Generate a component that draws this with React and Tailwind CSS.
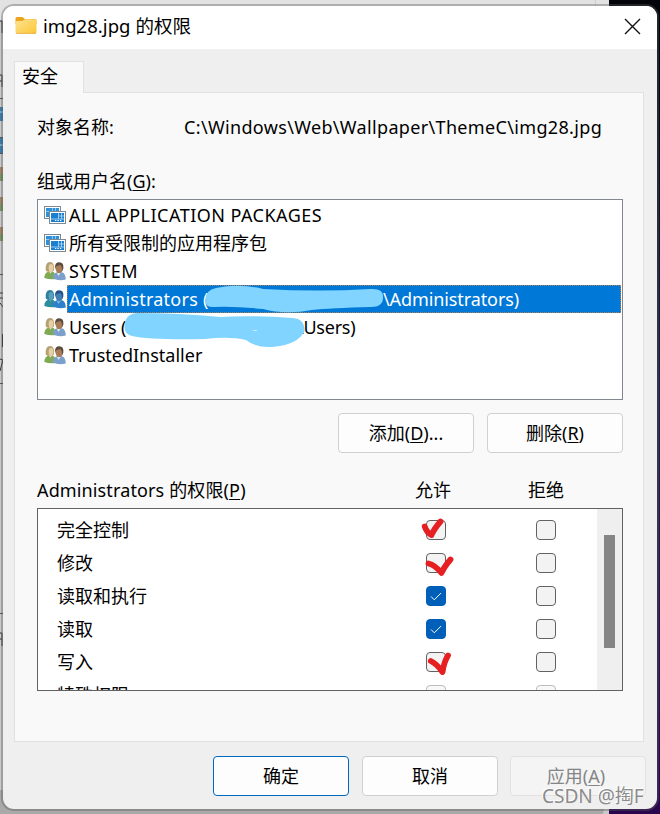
import React from 'react';

const FONT = "font-['Noto_Sans','Noto_Sans_CJK_SC',sans-serif]";

function Folder() {
  return (
    <svg width="22" height="19" viewBox="0 0 22 19" className="mb-1 shrink-0">
      <defs>
        <linearGradient id="fold" x1="0" y1="0" x2="1" y2="1">
          <stop offset="0" stopColor="#ffe391" />
          <stop offset="1" stopColor="#fbc737" />
        </linearGradient>
      </defs>
      <path d="M0.5 2.5 Q0.5 1 2 1 H7.5 L9.8 3 H20 Q21.5 3 21.5 4.5 V8 H0.5Z" fill="#eaa51c" />
      <path d="M0.5 6.5 Q0.5 5 2 5 H7.5 L9.8 3.2 H20 Q21.5 3.2 21.5 4.7 V16 Q21.5 17.5 20 17.5 H2 Q0.5 17.5 0.5 16Z" fill="url(#fold)" />
      <path d="M1 17.4 H21" stroke="#e2a93a" strokeWidth="0.8" />
    </svg>
  );
}

function PackageIcon() {
  return (
    <svg width="22" height="20" viewBox="0 0 22 20" className="shrink-0">
      <rect x="0.5" y="1.5" width="16" height="12" fill="#fff" stroke="#7d8993" />
      <rect x="2" y="3" width="13" height="9" fill="#2e8fda" />
      <path d="M2 6.5H15M8.5 3V6.5M11.5 3V6.5" stroke="#b7dcf6" strokeWidth="0.7" />
      <rect x="5.5" y="6.5" width="16" height="12" fill="#fff" stroke="#7d8993" />
      <rect x="7" y="8" width="13" height="9" fill="#1b7fd0" />
      <path d="M7 14H20M14.5 8V14M17.5 8V14M14.5 11H20" stroke="#b7dcf6" strokeWidth="0.8" />
      <path d="M11 15.5h1.3M13.5 15.5h1.3M16 15.5h1.3" stroke="#fff" strokeWidth="1.1" />
    </svg>
  );
}

function PeopleIcon({ selected }) {
  const c = selected
    ? { h1: '#2e7f9f', f1: '#5a9fbb', b1: '#2d8c9d', h2: '#245387', f2: '#3f7fb6', b2: '#2f80ca', n: '#80b4d9' }
    : { h1: '#b5a070', f1: '#e6cfa6', b1: '#80a955', h2: '#5d4a3d', f2: '#a97c58', b2: '#7ba0cc', n: '#dce5ed' };
  return (
    <svg width="22" height="20" viewBox="0 0 22 20" className="shrink-0">
      <path d="M0.3 17 Q0.3 11.5 5 10.5 H8.5 Q11.5 11 12 18 Q6 19 0.3 17Z" fill={c.b1} />
      <path d="M1.8 9.5 Q1 1 6 1 Q11 1 10 9.5 L8 11 H4Z" fill={c.h1} />
      <ellipse cx="7" cy="6.8" rx="2.4" ry="3.9" fill={c.f1} />
      <path d="M4.5 10.3 L6.5 12.8 L8.5 10.3Z" fill={c.f1} />
      <path d="M9 17.5 Q9 12 13 11.3 H18 Q21.5 12.3 21.8 18.5 Q15 20.5 9 17.5Z" fill={c.b2} />
      <path d="M11 6 Q11 1.3 15.3 1.3 Q20 1.3 19.3 7.5 Q18.8 10.5 17 11 L12 8Z" fill={c.h2} />
      <path d="M11.3 6 Q13 4.5 16.3 4 Q18.6 6 18.2 9 Q17.4 12.6 14.8 12.6 Q12 12 11.3 6Z" fill={c.f2} />
      <path d="M12.8 12 L14.5 15 L16.6 12Z" fill={c.n} />
    </svg>
  );
}

function Member({ icon, selected, children, className = '' }) {
  return (
    <div className="flex h-7 items-center pl-1.5">
      {icon === 'package' ? <PackageIcon /> : <PeopleIcon selected={selected} />}
      <div className={`ml-px mr-px flex h-7 flex-1 items-center whitespace-pre pl-0.5 ${className} ${selected ? 'border border-dotted border-[#b08050] bg-[#0078d7] pl-px text-white' : ''}`}>
        {children}
      </div>
    </div>
  );
}

function Box({ checked, faint }) {
  return (
    <span className={`flex size-5 shrink-0 items-center justify-center rounded-[4px] border ${checked ? 'border-[#005fb8] bg-[#005fb8]' : faint ? 'border-[#bdbdbd] bg-[#f8f8f8]' : 'border-[#626262] bg-[#f3f3f3]'}`}>
      {checked && (
        <svg width="12" height="10" viewBox="0 0 12 10" fill="none" stroke="#fff" strokeWidth="1">
          <path d="M1 5.5 L4.3 8.8 L11 2.1" />
        </svg>
      )}
    </span>
  );
}

function Permission({ name, checked, faint }) {
  return (
    <div className="flex h-[33px] shrink-0 items-center">
      <span className="w-[369px]">{name}</span>
      <Box checked={checked} faint={faint} />
      <span className="w-[90px]" />
      <Box faint={faint} />
    </div>
  );
}

function Button({ children, className }) {
  return (
    <button className={`flex h-10 w-[136px] shrink-0 items-center justify-center rounded-[4px] border ${className}`}>
      <span>{children}</span>
    </button>
  );
}

function Desktop() {
  return (
    <div className="absolute inset-0 bg-[#c9c9c9]">
      <div className="absolute left-0 top-0 h-5 w-[609px] bg-[#e2e2e2]" />
      <div className="absolute left-[595px] top-0 h-5 w-px bg-[#cfcfcf]" />
      <div className="absolute right-0 top-0 h-full w-[51px] bg-linear-to-b from-[#02040a] via-[#20204a] to-[#29054d]" />
      <div className="absolute bottom-0 left-0 h-6 w-[609px] bg-[#a9a9a9] [clip-path:polygon(0_0,100%_0,99%_100%,0_100%)]" />
      <svg className="absolute left-0 top-0" width="6" height="814">
        <g stroke="#555" strokeWidth="1">
          <path d="M0 98.5H3M0 137.5H3M0 153.5H3M0 274.5H3M0 383.5H3M0 613.5H3" />
        </g>
        <path d="M0 107h3v14h-3zM0 138h3v15h-3z" fill="#377caf" />
        <path d="M0 112h3M0 145h3" stroke="#b7d8ed" />
        <path d="M0 167h3v7h-3zM0 197h3v7h-3zM0 227h3v7h-3z" fill="#a28467" />
        <path d="M0 174h3v7h-3zM0 204h3v7h-3zM0 234h3v7h-3z" fill="#779363" />
        <path d="M0 21h2v12M0 75h2v12M0 81h2M0 293h3M0 298h3M0 303l3 4M2.5 334v13M0 359l3 1l-3 11M0 633h2v13M0 639h2" stroke="#333" fill="none" />
      </svg>
    </div>
  );
}

export default function App() {
  return (
    <div className={`relative h-[814px] w-[660px] overflow-hidden text-[18px] leading-6 text-black ${FONT}`}>
      <Desktop />
      <div className="relative flex h-full w-full pl-[3px] pt-1.5">
        <main className="flex h-[803px] w-[654px] flex-col overflow-hidden rounded-[11px] bg-[#efefef] shadow-[0_0_0_2px_rgba(90,90,90,0.38)]">
          <header className="flex h-[43px] shrink-0 items-center bg-white pl-3">
            <Folder />
            <h1 className="mb-[3px] ml-1.5 flex-1 text-[18.5px] tracking-[0.05px]">img28.jpg 的权限</h1>
            <svg width="17" height="17" viewBox="0 0 17 17" className="mb-0.5 mr-4" stroke="#111" strokeWidth="1.4">
              <path d="M1 1L16 16M16 1L1 16" />
            </svg>
          </header>

          <div className="z-10 ml-[11px] mt-3 flex h-8 w-[70px] shrink-0 items-center border border-b-0 border-[#e1e1e1] bg-[#f9f9f9] pb-[3px] pl-[7px]">安全</div>
          <section className="-mt-px ml-[11px] flex h-[650px] w-[630px] shrink-0 flex-col border border-[#e1e1e1] bg-[#f9f9f9] pl-[22px] pt-[22px]">
            <div className="flex h-6 items-center">
              <span className="w-[147px]">对象名称:</span>
              <span className="tracking-[0.34px]">C:\Windows\Web\Wallpaper\ThemeC\img28.jpg</span>
            </div>
            <div className="mt-[30px] h-6">组或用户名(<u className="decoration-1 underline-offset-2">G</u>):</div>
            <div className="relative mt-1.5 h-[201px] w-[586px] border border-[#828790] bg-white pt-px">
              <Member icon="package" className="tracking-[0.47px]">ALL APPLICATION PACKAGES</Member>
              <Member icon="package">所有受限制的应用程序包</Member>
              <Member className="tracking-[0.45px]">SYSTEM</Member>
              <Member selected><span className="w-[316px] tracking-[0.25px]">Administrators (</span></Member>
              <Member className="-tracking-[0.1px]">Users (</Member>
              <Member>TrustedInstaller</Member>
              <span className="absolute left-[345px] top-[87px] -tracking-[0.1px] text-white">\Administrators)</span>
              <span className="absolute left-[259px] top-[115px] -tracking-[0.25px]">\Users)</span>
              <svg className="absolute -left-px -top-px" width="586" height="201" viewBox="37 199 586 201" fill="#80d4ff">
                <path d="M205.5 301 Q205 290 216 288 Q240 283 263 289 Q320 292 370 289 Q383 288 383 296 Q384 307 371 307 Q330 308 312 310 Q285 315 263 309 Q235 306 213 307 Q205 307 205.5 301Z" />
                <path d="M124.5 326 Q125 314 137 313 Q180 313 220 317 Q250 315 293 318 Q305 319 304.5 331 Q298 345 272 347 Q256 348 246 340 Q230 336 205 339 Q150 340 132 336 Q124 334 124.5 326Z" />
                <path d="M253 330.5h4" stroke="#d9f2ff" strokeWidth="0.8" />
              </svg>
            </div>
            <div className="mt-[13px] flex gap-[13px] pl-[301px]">
              <Button className="border-[#d0d0d0] bg-[#fdfdfd]">添加(<u className="decoration-1 underline-offset-2">D</u>)...</Button>
              <Button className="border-[#d0d0d0] bg-[#fdfdfd]">删除(<u className="decoration-1 underline-offset-2">R</u>)</Button>
            </div>
            <div className="mt-[25px] flex h-6 items-center">
              <span className="w-[378px] tracking-[0.13px]">Administrators 的权限(<u className="decoration-1 underline-offset-2">P</u>)</span>
              <span className="w-[113px]">允许</span>
              <span>拒绝</span>
            </div>
            <div className="relative mt-[6px] flex h-[183px] w-[586px] border border-[#626262] bg-white">
              <div className="flex flex-1 flex-col overflow-hidden pl-[19px] pt-[4px]">
                <Permission name="完全控制" />
                <Permission name="修改" />
                <Permission name="读取和执行" checked />
                <Permission name="读取" checked />
                <Permission name="写入" />
                <Permission name="特殊权限" faint />
              </div>
              <div className="w-[25px] bg-[#efefef] pl-[7px] pt-[26px]">
                <div className="h-[113px] w-[11px] bg-[#858585]" />
              </div>
              <svg className="absolute -left-px -top-px" width="586" height="183" viewBox="37 508 586 183" fill="none" stroke="#e51f22" strokeWidth="5.8" strokeLinecap="round" strokeLinejoin="round">
                <path d="M424.7 526.5 Q427 533 431.5 535 Q434 529 440.5 521.5" />
                <path d="M428.5 563.5 Q435 565 441.5 573 Q444 567 450.5 559.5" />
                <path d="M430.8 661 Q437 664 442.5 672 Q444 662 448 655.5" />
              </svg>
            </div>
          </section>

          <footer className="mt-3.5 flex pl-[210px]">
            <Button className="mr-[13px] border-[#0067c0] bg-[#fdfdfd]">确定</Button>
            <Button className="mr-3 border-[#d0d0d0] bg-[#fdfdfd]">取消</Button>
            <Button className="border-[#e2e2e2] bg-[#f4f4f4] pr-1 text-[#858585]">应用(<u className="decoration-1 underline-offset-2">A</u>)</Button>
          </footer>
        </main>
      </div>
      <span className="absolute left-[542px] top-[784px] whitespace-nowrap text-[19px] text-[#8b8b8b] [text-shadow:-1px_-1px_0_#fff]">CSDN @掏F</span>
    </div>
  );
}
